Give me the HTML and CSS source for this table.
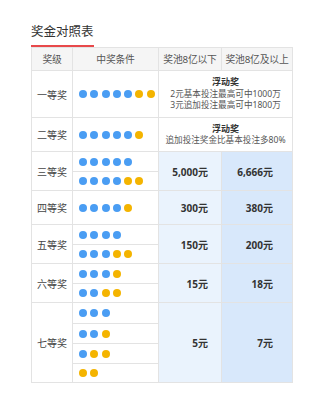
FILE: index.html
```html
<!DOCTYPE html>
<html lang="zh-CN">
<head>
<meta charset="utf-8">
<link rel="stylesheet" href="styles.css">
</head>
<body>
<div class="wrap">
  <div class="title">奖金对照表</div>
  <table class="prize">
    <colgroup>
      <col class="c1"><col class="c2"><col class="c3"><col class="c4">
    </colgroup>
    <thead>
      <tr class="h23">
        <th>奖级</th><th>中奖条件</th><th>奖池8亿以下</th><th>奖池8亿及以上</th>
      </tr>
    </thead>
    <tbody>
      <tr class="h47">
        <td class="lv">一等奖</td>
        <td class="dots"><span class="d b"></span><span class="d b"></span><span class="d b"></span><span class="d b"></span><span class="d b"></span><span class="d y"></span><span class="d y"></span></td>
        <td class="float" colspan="2"><b>浮动奖</b><br>2元基本投注最高可中1000万<br>3元追加投注最高可中1800万</td>
      </tr>
      <tr class="h34">
        <td class="lv">二等奖</td>
        <td class="dots"><span class="d b"></span><span class="d b"></span><span class="d b"></span><span class="d b"></span><span class="d b"></span><span class="d y"></span></td>
        <td class="float" colspan="2"><b>浮动奖</b><br>追加投注奖金比基本投注多80%</td>
      </tr>
      <tr class="h20">
        <td class="lv" rowspan="2">三等奖</td>
        <td class="dots"><span class="d b"></span><span class="d b"></span><span class="d b"></span><span class="d b"></span><span class="d b"></span></td>
        <td class="amt a1" rowspan="2">5,000元</td>
        <td class="amt a2" rowspan="2">6,666元</td>
      </tr>
      <tr class="h19">
        <td class="dots"><span class="d b"></span><span class="d b"></span><span class="d b"></span><span class="d b"></span><span class="d y"></span><span class="d y"></span></td>
      </tr>
      <tr class="h34">
        <td class="lv">四等奖</td>
        <td class="dots"><span class="d b"></span><span class="d b"></span><span class="d b"></span><span class="d b"></span><span class="d y"></span></td>
        <td class="amt a1">300元</td>
        <td class="amt a2">380元</td>
      </tr>
      <tr class="h20">
        <td class="lv" rowspan="2">五等奖</td>
        <td class="dots"><span class="d b"></span><span class="d b"></span><span class="d b"></span><span class="d b"></span></td>
        <td class="amt a1" rowspan="2">150元</td>
        <td class="amt a2" rowspan="2">200元</td>
      </tr>
      <tr class="h19">
        <td class="dots"><span class="d b"></span><span class="d b"></span><span class="d b"></span><span class="d y"></span><span class="d y"></span></td>
      </tr>
      <tr class="h20">
        <td class="lv" rowspan="2">六等奖</td>
        <td class="dots"><span class="d b"></span><span class="d b"></span><span class="d b"></span><span class="d y"></span></td>
        <td class="amt a1" rowspan="2">15元</td>
        <td class="amt a2" rowspan="2">18元</td>
      </tr>
      <tr class="h19">
        <td class="dots"><span class="d b"></span><span class="d b"></span><span class="d y"></span><span class="d y"></span></td>
      </tr>
      <tr class="h21">
        <td class="lv" rowspan="4">七等奖</td>
        <td class="dots"><span class="d b"></span><span class="d b"></span><span class="d b"></span></td>
        <td class="amt a1" rowspan="4">5元</td>
        <td class="amt a2" rowspan="4">7元</td>
      </tr>
      <tr class="h20">
        <td class="dots"><span class="d b"></span><span class="d b"></span><span class="d y"></span></td>
      </tr>
      <tr class="h20">
        <td class="dots"><span class="d b"></span><span class="d y"></span><span class="d y"></span></td>
      </tr>
      <tr class="h19">
        <td class="dots"><span class="d y"></span><span class="d y"></span></td>
      </tr>
    </tbody>
  </table>
</div>
</body>
</html>
```

FILE: styles.css
```css
* { box-sizing: border-box; }
html, body { margin: 0; padding: 0; background: #fff; }
body {
  font-family: "Noto Sans", "Noto Sans CJK SC", sans-serif;
  color: #333;
}
.wrap {
  display: flex;
  flex-direction: column;
  align-items: flex-start;
  padding: 24px 0 0 31px;
}
.title {
  width: 63px;
  font-size: 12.5px;
  line-height: 16px;
  color: #333;
  padding-bottom: 5px;
  border-bottom: 2px solid #e8494b;
  white-space: nowrap;
}
.prize {
  border-collapse: collapse;
  table-layout: fixed;
  width: 261px;
  font-size: 10px;
}
.c1 { width: 41px; }
.c2 { width: 86px; }
.c3 { width: 63px; }
.c4 { width: 71px; }
.prize th, .prize td {
  border: 1px solid #e3e3e3;
  padding: 0;
  vertical-align: middle;
}
.prize th {
  background: #f5f5f5;
  font-weight: normal;
  color: #555;
  font-size: 9.8px;
  white-space: nowrap;
  text-align: center;
  letter-spacing: -0.2px;
}
.h23 { height: 23px; }
.h47 { height: 47px; }
.h34 { height: 34px; }
.h21 { height: 21px; }
.h20 { height: 20px; }
.h19 { height: 19px; }
.lv {
  text-align: center;
  color: #444;
  font-size: 10px;
}
.dots {
  padding-left: 6px !important;
  line-height: 0;
  white-space: nowrap;
}
.d {
  display: inline-block;
  width: 8px;
  height: 8px;
  border-radius: 50%;
  margin-right: 3.3px;
  vertical-align: middle;
}
.d:last-child { margin-right: 0; }
.d.b { background: #4a9df3; }
.d.y { background: #f4b400; }
.float {
  text-align: center;
  font-size: 8.6px;
  line-height: 11.5px;
  color: #555;
  white-space: nowrap;
}
.float b { color: #333; font-size: 9px; }
.amt {
  text-align: right;
  font-weight: bold;
  font-size: 10px;
  color: #333;
}
.a1 { background: #eaf3fd; padding-right: 13px !important; }
.a2 { background: #d8e8fb; padding-right: 19px !important; }
```
